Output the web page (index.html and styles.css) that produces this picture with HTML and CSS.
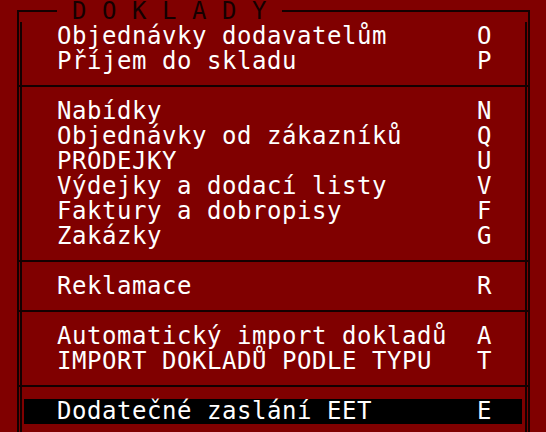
FILE: index.html
```html
<!DOCTYPE html>
<html lang="cs">
<head>
<meta charset="utf-8">
<title>Doklady</title>
<link rel="stylesheet" href="styles.css">
</head>
<body>
<div class="screen">
  <div class="head">
    <div class="seg seg-left"></div>
    <div class="title">&nbsp;D O K L A D Y&nbsp;</div>
    <div class="seg seg-right"></div>
  </div>
  <div class="body">
    <div class="inner">
      <div class="row"><span class="label">Objednávky dodavatelům</span><span class="key">O</span></div>
      <div class="row"><span class="label">Příjem do skladu</span><span class="key">P</span></div>
      <div class="sep"></div>
      <div class="row"><span class="label">Nabídky</span><span class="key">N</span></div>
      <div class="row"><span class="label">Objednávky od zákazníků</span><span class="key">Q</span></div>
      <div class="row"><span class="label">PRODEJKY</span><span class="key">U</span></div>
      <div class="row"><span class="label">Výdejky a dodací listy</span><span class="key">V</span></div>
      <div class="row"><span class="label">Faktury a dobropisy</span><span class="key">F</span></div>
      <div class="row"><span class="label">Zakázky</span><span class="key">G</span></div>
      <div class="sep"></div>
      <div class="row"><span class="label">Reklamace</span><span class="key">R</span></div>
      <div class="sep"></div>
      <div class="row"><span class="label">Automatický import dokladů</span><span class="key">A</span></div>
      <div class="row"><span class="label">IMPORT DOKLADŮ PODLE TYPU</span><span class="key">T</span></div>
      <div class="sep"></div>
      <div class="row row-active"><span class="label">Dodatečné zaslání EET</span><span class="key">E</span></div>
      <div class="row"></div>
    </div>
  </div>
</div>
</body>
</html>
```

FILE: styles.css
```css
html, body {
  margin: 0;
  padding: 0;
}

body {
  background: #800000;
  width: 546px;
  height: 432px;
  overflow: hidden;
  font-family: "DejaVu Sans Mono", "Liberation Mono", monospace;
  font-size: 24px;
  letter-spacing: 0.55px;
  color: #fff;
}

.screen {
  margin-left: 17px;
  width: 513px;
}

.head {
  display: flex;
  height: 22px;
}

.seg {
  margin-top: 10px;
  border-top: 2px solid #140000;
}

.seg-left {
  width: 38px;
  border-left: 2px solid #140000;
}

.seg-right {
  flex: 1;
  border-right: 2px solid #140000;
}

.title {
  width: 225px;
  height: 20px;
  padding-top: 2px;
  color: #140000;
  line-height: 18px;
  white-space: pre;
}

.body {
  border-left: 2px solid #140000;
  border-right: 2px solid #140000;
  padding: 0 1px;
}

.inner {
  border-left: 2px solid #140000;
  border-right: 2px solid #140000;
  padding-top: 2px;
}

.row {
  display: flex;
  align-items: center;
  height: 25px;
  padding-left: 35px;
  white-space: pre;
}

.label,
.key {
  line-height: 19px;
}

.label {
  width: 420px;
}

.row-active {
  background: #000;
  margin: 0 3px 0 2px;
  padding-left: 33px;
}

.sep {
  height: 25px;
  display: flex;
  align-items: center;
  margin: 0 -3px;
  padding-bottom: 1px;
  box-sizing: border-box;
}

.sep::before {
  content: "";
  flex: 1;
  height: 2px;
  background: #140000;
}
```
